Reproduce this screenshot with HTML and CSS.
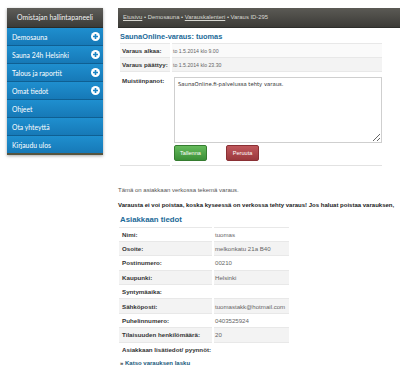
FILE: index.html
```html
<!DOCTYPE html>
<html lang="fi">
<head>
    <meta charset="UTF-8">
    <title>SaunaOnline-varaus</title>
    <link rel="stylesheet" href="styles.css">
</head>
<body>
    <div class="page">
        <aside class="sidebar">
            <div class="sidebar-head">Omistajan hallintapaneeli</div>
            <ul class="menu">
                <li><a href="#">Demosauna</a><span class="plus"><svg width="9" height="9" viewBox="0 0 9 9"><circle cx="4.5" cy="4.5" r="4.5" fill="#fff"/><path d="M4.5 2v5M2 4.5h5" stroke="#1a84c4" stroke-width="1.6"/></svg></span></li>
                <li><a href="#">Sauna 24h Helsinki</a><span class="plus"><svg width="9" height="9" viewBox="0 0 9 9"><circle cx="4.5" cy="4.5" r="4.5" fill="#fff"/><path d="M4.5 2v5M2 4.5h5" stroke="#1a84c4" stroke-width="1.6"/></svg></span></li>
                <li><a href="#">Talous ja raportit</a><span class="plus"><svg width="9" height="9" viewBox="0 0 9 9"><circle cx="4.5" cy="4.5" r="4.5" fill="#fff"/><path d="M4.5 2v5M2 4.5h5" stroke="#1a84c4" stroke-width="1.6"/></svg></span></li>
                <li><a href="#">Omat tiedot</a><span class="plus"><svg width="9" height="9" viewBox="0 0 9 9"><circle cx="4.5" cy="4.5" r="4.5" fill="#fff"/><path d="M4.5 2v5M2 4.5h5" stroke="#1a84c4" stroke-width="1.6"/></svg></span></li>
                <li><a href="#">Ohjeet</a></li>
                <li><a href="#">Ota yhteyttä</a></li>
                <li><a href="#">Kirjaudu ulos</a></li>
            </ul>
        </aside>

        <main class="content">
            <div class="crumbs">
                <a href="#">Etusivu</a> • Demosauna • <a href="#">Varauskalenteri</a> • Varaus ID-295
            </div>
            <div class="inner">
                <h2 class="title">SaunaOnline-varaus: tuomas</h2>
                <div class="booking">
                    <div class="k first">Varaus alkaa:</div>
                    <div class="v first">to 1.5.2014 klo 9.00</div>
                    <div class="k alt">Varaus päättyy:</div>
                    <div class="v alt">to 1.5.2014 klo 23.30</div>
                    <div class="k notes">Muistiinpanot:</div>
                    <div class="v notes">
                        <textarea class="memo">SaunaOnline.fi-palvelussa tehty varaus.</textarea>
                        <div class="actions">
                            <button class="btn btn-save">Tallenna</button>
                            <button class="btn btn-cancel">Peruuta</button>
                        </div>
                    </div>
                </div>

                <p class="info">Tämä on asiakkaan verkossa tekemä varaus.</p>
                <p class="warn">Varausta ei voi poistaa, koska kyseessä on verkossa tehty varaus! Jos haluat poistaa varauksen,</p>

                <h3 class="title sub">Asiakkaan tiedot</h3>
                <div class="customer">
                    <div class="k">Nimi:</div><div class="v">tuomas</div>
                    <div class="k alt">Osoite:</div><div class="v alt">melkonkatu 21a B40</div>
                    <div class="k">Postinumero:</div><div class="v">00210</div>
                    <div class="k alt">Kaupunki:</div><div class="v alt">Helsinki</div>
                    <div class="k">Syntymäaika:</div><div class="v"></div>
                    <div class="k alt">Sähköposti:</div><div class="v alt">tuomastakk@hotmail.com</div>
                    <div class="k">Puhelinnumero:</div><div class="v">0403525924</div>
                    <div class="k alt">Tilaisuuden henkilömäärä:</div><div class="v alt">20</div>
                    <div class="k">Asiakkaan lisätiedot/ pyynnöt:</div><div class="v"></div>
                </div>

                <a class="invoice" href="#"><span class="raquo">»</span> <u>Katso varauksen lasku</u></a>
            </div>
        </main>
    </div>
</body>
</html>
```

FILE: styles.css
```css
html, body {
    margin: 0;
    padding: 0;
    overflow: hidden;
}
body {
    background: #fff;
    font-family: 'Liberation Sans', Arial, sans-serif;
    color: #333;
}
.page {
    display: flex;
    align-items: flex-start;
    padding: 8px 0 0 7px;
    gap: 15px;
}

/* sidebar */
.sidebar {
    width: 96px;
    flex: none;
    background: #1677b4;
    border-bottom: 2px solid #55543f;
    box-shadow: 0 1px 3px rgba(0, 0, 0, 0.35);
    font-family: Lato, 'Open Sans', sans-serif;
}
.sidebar-head {
    height: 19px;
    line-height: 19px;
    text-align: center;
    font-size: 6.9px;
    color: #f2f2f2;
    background: linear-gradient(#5e5d59, #3b3b38);
    border-bottom: 1px solid #2b2b29;
}
.menu {
    list-style: none;
    margin: 0;
    padding: 0;
}
.menu li {
    display: flex;
    align-items: center;
    justify-content: space-between;
    height: 17px;
    padding: 0 3px 0 5px;
    background: linear-gradient(#1f8fcf, #1679b7);
    border-bottom: 1px solid #0f5f92;
}
.menu li:last-child {
    border-bottom: none;
}
.menu a {
    color: #fff;
    text-decoration: none;
    font-size: 6.8px;
}
.plus {
    display: flex;
    width: 9px;
    height: 9px;
}

/* main */
.content {
    flex: 1;
    min-width: 0;
}
.crumbs {
    height: 19px;
    line-height: 19px;
    padding-left: 5px;
    white-space: nowrap;
    font-size: 5.9px;
    color: #d8d8d2;
    background: linear-gradient(#5b5a55, #3c3b37);
    border-bottom: 1px solid #2e2e2b;
}
.crumbs a {
    color: #d8d8d2;
}
.inner {
    padding-left: 2px;
}
.title {
    margin: 3.5px 0 2.5px;
    line-height: 9px;
    font-size: 7.4px;
    font-weight: bold;
    color: #1b6a98;
}
.title.sub {
    margin: 6px 0 2.5px;
    font-size: 7.8px;
}

/* key / value lists */
.booking, .customer {
    display: grid;
    column-gap: 2px;
}
.k, .v {
    display: flex;
    align-items: center;
    box-sizing: border-box;
    border-top: 1px solid #e8e8e8;
    white-space: nowrap;
}
.k {
    font-weight: bold;
    color: #333;
}
.v {
    color: #666;
}
.alt {
    background: #f3f3f3;
}

.booking {
    grid-template-columns: 50px 210px;
    grid-template-rows: 14px 14px auto;
    font-size: 6.2px;
}
.booking .k {
    padding-left: 2px;
}
.booking .v {
    padding-left: 1px;
    font-size: 5.2px;
}
.booking .first {
    background: #fafafa;
}
.booking .notes {
    flex-direction: column;
    align-items: flex-start;
    border-bottom: 1px solid #e2e2e2;
}
.booking .k.notes {
    padding-top: 5px;
}
.booking .v.notes {
    padding: 5px 0 4px 2px;
}
.memo {
    display: block;
    box-sizing: border-box;
    width: 208px;
    height: 66px;
    margin: 0;
    padding: 3px;
    border: 1px solid #cfcfcf;
    border-radius: 0;
    font-family: 'DejaVu Sans', Verdana, sans-serif;
    font-size: 5.3px;
    color: #333;
    resize: vertical;
}
.actions {
    display: flex;
    gap: 19px;
    margin-top: 2px;
}
.btn {
    box-sizing: border-box;
    width: 33px;
    height: 16px;
    padding: 0;
    border-radius: 2px;
    font-family: 'Liberation Sans', Arial, sans-serif;
    font-size: 5.6px;
    color: #fff;
    cursor: pointer;
}
.btn-save {
    background: linear-gradient(#66bb5c, #3b8f37);
    border: 1px solid #357c30;
}
.btn-cancel {
    background: linear-gradient(#c0585c, #9a383c);
    border: 1px solid #8a3034;
}

/* messages */
.info {
    margin: 21px 0 0 -2px;
    line-height: 7px;
    font-size: 6px;
    color: #555;
}
.warn {
    margin: 8px 0 0 -2px;
    line-height: 7px;
    white-space: nowrap;
    font-size: 6px;
    font-weight: bold;
    color: #222;
}

.customer {
    margin-left: -1px;
    grid-template-columns: 93px 75px;
    grid-auto-rows: 14.4px;
    font-size: 6.2px;
}
.customer .k {
    padding-left: 3px;
}
.customer .v {
    padding-left: 1px;
    font-size: 6.1px;
}
.invoice {
    display: block;
    margin-top: 4px;
    font-size: 6px;
    font-weight: bold;
    color: #1a5a7c;
    text-decoration: none;
}
.raquo {
    color: #333;
}
```
